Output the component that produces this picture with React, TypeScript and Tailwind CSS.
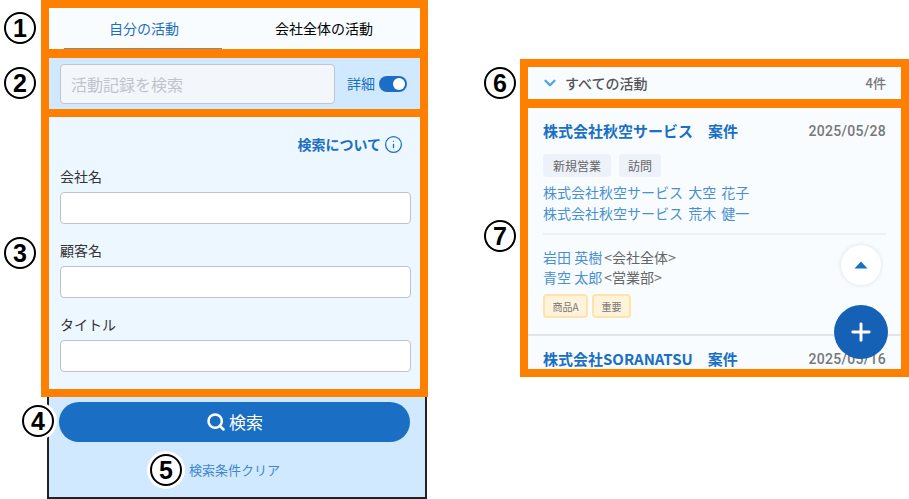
import { ChevronDown, Info, Plus, Search } from 'lucide-react';

const font = { fontFamily: '"Noto Sans CJK JP", "Liberation Sans", sans-serif' };

function Marker({ label, className }: { label: string; className: string }) {
  return (
    <div
      className={`absolute flex h-[32px] w-[32px] items-center justify-center rounded-full border-2 border-black bg-white text-[25px] font-bold leading-none text-black shadow-[0_0_0_3px_#ffffff] [font-family:'Liberation_Sans',sans-serif] ${className}`}
    >
      {label}
    </div>
  );
}

function Field({ label }: { label: string }) {
  return (
    <div className="flex h-[74px] flex-col">
      <label className="h-[42px] pt-[14px] text-[14px] leading-[24px] text-[#333]">{label}</label>
      <input className="h-[32px] w-[351px] rounded-[4px] border border-[#bcc2cf] bg-white" />
    </div>
  );
}

export default function App() {
  return (
    <div className="relative flex h-[499px] w-[909px] overflow-hidden bg-white" style={font}>
      <div className="ml-[41px] flex w-[387px] flex-col">
        {/* 1 tabs */}
        <div className="flex h-[58px] border-[8px] border-b-[9px] border-[#ff8000] bg-[#f8fcff] pl-[15px] text-[14px]">
          <div className="flex w-[160px] items-center justify-center border-b border-[#888] pl-[2px] text-[#1a6fc4]">自分の活動</div>
          <div className="flex w-[200px] items-center justify-center pl-[6px] text-black">会社全体の活動</div>
        </div>
        {/* 2 search */}
        <div className="flex h-[59px] items-center border-x-[8px] border-b-[8px] border-[#ff8000] bg-[#d1e9ff] pl-[11px]">
          <input
            placeholder="活動記録を検索"
            className="h-[40px] w-[275px] rounded-[4px] border border-[#c0c4cc] bg-[#f3f6fb] px-[10px] text-[16px] placeholder:text-[#c0c4cc]"
          />
          <span className="ml-[12px] text-[14px] text-[#1a6fc4]">詳細</span>
          <div className="ml-[4px] flex h-[16px] w-[28px] items-center justify-end rounded-full bg-[#1a6fc4] pr-[2px]">
            <div className="h-[12px] w-[12px] rounded-full bg-white" />
          </div>
        </div>
        {/* 3 detail form */}
        <div className="h-[280px] border-x-[8px] border-b-[8px] border-[#ff8000] bg-[#edf7ff] pl-[11px] pt-[17px]">
          <div className="flex h-[21px] items-center justify-end gap-[3px] pr-[17px] text-[14px] font-bold text-[#1a6fc4]">
            検索について
            <Info size={19} strokeWidth={1.6} />
          </div>
          <div className="-mt-[5px] flex flex-col">
            <Field label="会社名" />
            <Field label="顧客名" />
            <Field label="タイトル" />
          </div>
        </div>
        {/* 4, 5 actions */}
        <div className="ml-[6px] flex h-[102px] w-[380px] flex-col items-start border-x-2 border-b-2 border-[#222] bg-[#d1e9ff] pl-[10px] pt-[5px]">
          <button className="flex h-[40px] w-[351px] items-center justify-center gap-[3px] rounded-full bg-[#1a6fc4] text-[17px] text-white">
            <Search size={20} strokeWidth={3} />
            検索
          </button>
          <a className="ml-[130px] mt-[19px] text-[13px] leading-[18px] text-[#3b87cf]">検索条件クリア</a>
        </div>
      </div>

      <div className="ml-[92px] mt-[59px] flex h-[318px] w-[389px] flex-col">
        {/* 6 list header */}
        <div className="flex h-[49px] items-center border-[8px] border-b-[9px] border-[#ff8000] bg-[#f8fcff] pl-[13px] pr-[15px]">
          <ChevronDown size={18} strokeWidth={3} className="text-[#4aa5ea]" />
          <span className="ml-[6px] text-[14px] font-medium text-[#555]">すべての活動</span>
          <span className="ml-auto text-[13px] font-medium text-[#777]">4件</span>
        </div>
        {/* 7 list */}
        <div className="relative h-[269px] overflow-hidden border-x-[8px] border-b-[8px] border-[#ff8000] bg-[#f8fcff]">
          <div className="px-[15px]">
            <div className="flex h-[46px] items-center justify-between">
              <span className="text-[15px] font-bold text-[#1a6fc4]">株式会社秋空サービス　案件</span>
              <span className="text-[14px] font-medium tracking-[0.3px] text-[#777] [font-family:Roboto,sans-serif]">2025/05/28</span>
            </div>
            <div className="flex gap-[8px]">
              <span className="flex h-[23px] items-center rounded-[4px] bg-[#edf1f9] px-[10px] text-[12px] text-[#666]">新規営業</span>
              <span className="flex h-[23px] items-center rounded-[4px] bg-[#edf1f9] px-[9px] text-[12px] text-[#666]">訪問</span>
            </div>
            <div className="mt-[5px] border-b-2 border-[#edf0f5] pb-[9px] text-[14px] leading-[21px] text-[#4a90d0] [word-spacing:2px]">
              <div>株式会社秋空サービス 大空 花子</div>
              <div>株式会社秋空サービス 荒木 健一</div>
            </div>
            <div className="mt-[12px] text-[14px] leading-[20px] text-[#666]">
              <div><span className="mr-[2px] text-[#4a90d0]">岩田 英樹</span>&lt;会社全体&gt;</div>
              <div><span className="mr-[2px] text-[#4a90d0]">青空 太郎</span>&lt;営業部&gt;</div>
            </div>
            <div className="mt-[7px] flex gap-[4px]">
              <span className="flex h-[24px] w-[45px] items-center justify-center rounded-[4px] border-2 border-[#ffe3ab] bg-[#fff3dc] text-[10px] text-[#777]">商品A</span>
              <span className="flex h-[24px] w-[39px] items-center justify-center rounded-[4px] border-2 border-[#ffe3ab] bg-[#fff3dc] text-[10px] text-[#777]">重要</span>
            </div>
          </div>
          <div className="mt-[16px] flex h-[40px] items-center justify-between border-t-2 border-[#e2e4ec] px-[15px] pt-[8px]">
            <span className="text-[15px] font-bold text-[#1a6fc4]">株式会社SORANATSU　案件</span>
            <span className="text-[14px] font-medium tracking-[0.3px] text-[#777] [font-family:Roboto,sans-serif]">2025/05/16</span>
          </div>
          <div className="absolute left-[313px] top-[137px] flex h-[40px] w-[40px] items-center justify-center rounded-full bg-white shadow-[0_0_4px_rgba(0,0,0,0.12)]">
            <svg width="14" height="8" viewBox="0 0 14 8"><path d="M7 0.5 L13.5 7.5 H0.5 Z" fill="#1a6fc4" /></svg>
          </div>
          <div className="absolute left-[306px] top-[197px] flex h-[54px] w-[54px] items-center justify-center rounded-full bg-[#1561b5] text-white">
            <Plus size={28} strokeWidth={2.5} />
          </div>
        </div>
      </div>

      <Marker label="1" className="left-[4px] top-[12px]" />
      <Marker label="2" className="left-[4px] top-[67px]" />
      <Marker label="3" className="left-[4px] top-[237px]" />
      <Marker label="4" className="left-[22px] top-[405px]" />
      <Marker label="5" className="left-[150px] top-[454px]" />
      <Marker label="6" className="left-[484px] top-[67px]" />
      <Marker label="7" className="left-[484px] top-[220px]" />
    </div>
  );
}
